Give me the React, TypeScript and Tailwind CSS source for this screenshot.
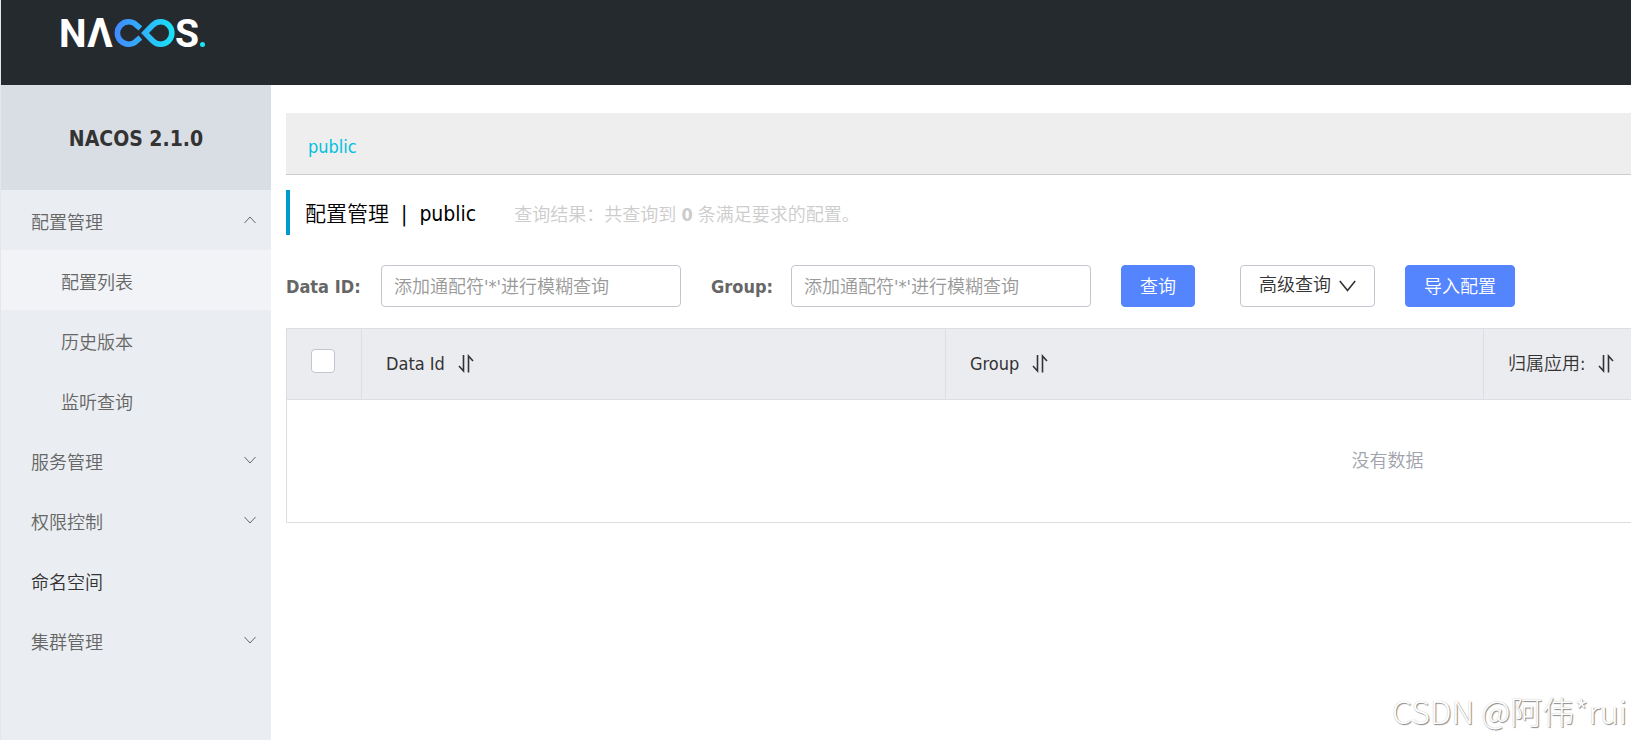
import { useState } from 'react';
import type { ReactNode } from 'react';

interface MenuItem {
  name: string;
  children?: string[];
}

const menu: MenuItem[] = [
  { name: '配置管理', children: ['配置列表', '历史版本', '监听查询'] },
  { name: '服务管理', children: [] },
  { name: '权限控制', children: [] },
  { name: '命名空间' },
  { name: '集群管理', children: [] },
];

function Logo() {
  return (
    <svg width="154" height="60" viewBox="56 4 154 60" role="img" aria-label="NACOS">
      <defs>
        <linearGradient id="loop" gradientUnits="userSpaceOnUse" x1="114" y1="33" x2="175" y2="33">
          <stop offset="0" stopColor="#4487ff" />
          <stop offset="1" stopColor="#18e4f8" />
        </linearGradient>
      </defs>
      <g fill="#fff" fontFamily="Roboto, sans-serif" fontWeight="700" fontSize="39">
        <text x="59" y="47">N</text>
        <text x="87" y="47" fontSize="40">Λ</text>
        <text x="175" y="47">S</text>
      </g>
      <g fill="none" stroke="url(#loop)" strokeWidth="5.6">
        <path d="M140.4 28.4 L136.2 24.8 A11.2 11.2 0 1 0 136.2 41.2 L140.4 37.6" />
        <path d="M145 33 L152.6 25.2 A11.2 11.2 0 1 1 152.6 40.8 Z" />
      </g>
      <circle cx="202.5" cy="44.5" r="2.5" fill="#18e4f8" />
    </svg>
  );
}

function Chevron({ up = false }: { up?: boolean }) {
  return (
    <svg width="12" height="14" viewBox="0 0 12 14" fill="none" stroke="currentColor">
      <path d={up ? 'M0.5 7 L6 1 L11.5 7' : 'M0.5 1 L6 7 L11.5 1'} />
    </svg>
  );
}

function SortButton({ label }: { label: string }) {
  return (
    <button aria-label={label} className="ml-[13px]">
      <svg width="16" height="20" viewBox="0 0 16 20" fill="none" stroke="currentColor" strokeWidth="1.6">
        <path d="M5.5 1 V17 L1 12" />
        <path d="M10.5 18.5 V2 L15 7" />
      </svg>
    </button>
  );
}

function HeadCell({ children, className = '' }: { children: ReactNode; className?: string }) {
  return (
    <th className={`border border-[#dcdee3] px-6 text-left font-normal whitespace-nowrap ${className}`}>
      <div className="flex items-center">{children}</div>
    </th>
  );
}

export default function App() {
  const [open, setOpen] = useState<Record<string, boolean>>({ 配置管理: true });
  const [dataId, setDataId] = useState('');
  const [group, setGroup] = useState('');

  const toggle = (name: string) => setOpen({ ...open, [name]: !open[name] });

  return (
    <div className="relative min-h-screen flex flex-col overflow-hidden border-l border-[#e6e6e6] bg-white font-['DejaVu_Sans_Condensed','Noto_Sans_CJK_SC_DemiLight','Noto_Sans_CJK_SC_Light','Noto_Sans_CJK_SC',sans-serif] text-lg text-[#333]">
      {/* Header */}
      <header className="h-[85px] bg-[#252a2f] px-[55px] pt-1">
        <a href="#" className="inline-block">
          <Logo />
        </a>
      </header>

      <div className="flex flex-1">
        {/* Sidebar */}
        <aside className="w-[270px] shrink-0 bg-[#eaedf1]">
          <h1 className="h-[105px] flex items-center justify-center bg-[#d9dde4] pt-1 text-[21px] font-bold">NACOS 2.1.0</h1>
          <nav>
            <ul>
              {menu.map(item => (
                <li key={item.name}>
                  {item.children ? (
                    <button
                      onClick={() => toggle(item.name)}
                      className="h-[60px] w-full flex items-center justify-between pl-[30px] pr-[15px] pt-1.5 text-[#666]"
                    >
                      {item.name}
                      <Chevron up={open[item.name]} />
                    </button>
                  ) : (
                    <a href="#" className="h-[60px] flex items-center pl-[30px] pt-1.5">{item.name}</a>
                  )}
                  {open[item.name] && (
                    <ul>
                      {item.children?.map((child, i) => (
                        <li key={child}>
                          <a
                            href="#"
                            className={`h-[60px] flex items-center pl-[60px] pt-1.5 text-[#666] ${i === 0 ? 'bg-[#f1f3f7]' : ''}`}
                          >
                            {child}
                          </a>
                        </li>
                      ))}
                    </ul>
                  )}
                </li>
              ))}
            </ul>
          </nav>
        </aside>

        {/* Main Content */}
        <main className="min-w-0 flex-1 overflow-hidden pl-[15px] pt-7">
          <div className="h-[62px] flex items-center border-b border-[#ccc] bg-[#eee] px-[22px] pt-1.5">
            <a href="#" className="text-[#00c1de]">public</a>
          </div>

          <div className="mt-[15px] h-[45px] flex items-center border-l-4 border-[#09c] pt-1 pl-[15px]">
            <h2 className="flex gap-3 text-[21px] text-black">
              <span>配置管理</span>
              <span>|</span>
              <span>public</span>
            </h2>
            <p className="ml-[38px] text-[#ccc]">
              查询结果：共查询到 <strong>0</strong> 条满足要求的配置。
            </p>
          </div>

          <form className="mt-[30px] flex items-center whitespace-nowrap" onSubmit={e => e.preventDefault()}>
            <label htmlFor="dataId" className="w-[95px] pt-0.5 font-bold text-[#666]">Data ID:</label>
            <input
              id="dataId"
              value={dataId}
              onChange={e => setDataId(e.target.value)}
              placeholder="添加通配符'*'进行模糊查询"
              className="h-[42px] w-[300px] rounded border border-[#c4c6cf] px-3 placeholder:text-[#999]"
            />
            <label htmlFor="group" className="ml-[30px] w-[80px] pt-0.5 font-bold text-[#666]">Group:</label>
            <input
              id="group"
              value={group}
              onChange={e => setGroup(e.target.value)}
              placeholder="添加通配符'*'进行模糊查询"
              className="h-[42px] w-[300px] rounded border border-[#c4c6cf] px-3 placeholder:text-[#999]"
            />
            <button className="ml-[30px] h-[42px] rounded border border-[#5584ff] bg-[#5584ff] px-[18px] pt-0.5 text-white">查询</button>
            <button type="button" className="ml-[45px] h-[42px] flex items-center gap-2 rounded border border-[#c4c6cf] px-[18px] pb-0.5">
              高级查询
              <svg width="17" height="12" viewBox="0 0 17 12" fill="none" stroke="currentColor" strokeWidth="1.6" className="mt-0.5">
                <path d="M0.8 1 L8.5 10.5 L16.2 1" />
              </svg>
            </button>
            <button type="button" className="ml-[30px] h-[42px] rounded border border-[#5584ff] bg-[#5584ff] px-[18px] pt-0.5 text-white">导入配置</button>
          </form>

          {/* The table is wider than the view and is cut off at the right */}
          <table className="mt-[21px] w-[2203px] table-fixed border-collapse">
            <thead>
              <tr className="h-[71px] bg-[#ebecf0]">
                <HeadCell className="w-[75px]">
                  <input
                    type="checkbox"
                    aria-label="全选"
                    className="mb-1.5 block size-6 shrink-0 appearance-none rounded border border-[#c4c6cf] bg-white checked:bg-[#5584ff]"
                  />
                </HeadCell>
                <HeadCell className="w-[584px]">
                  Data Id<SortButton label="Data Id" />
                </HeadCell>
                <HeadCell className="w-[538px]">
                  Group<SortButton label="Group" />
                </HeadCell>
                <HeadCell>
                  归属应用:<SortButton label="归属应用" />
                </HeadCell>
              </tr>
            </thead>
            <tbody>
              <tr className="h-[123px]">
                <td colSpan={4} className="border border-[#dcdee3] text-center text-[#a0a2ad]">没有数据</td>
              </tr>
            </tbody>
          </table>
        </main>
      </div>

      <span className="pointer-events-none absolute right-1 bottom-1.5 font-['Noto_Sans_CJK_SC',sans-serif] text-[32px] leading-[48px] font-light text-white [text-shadow:1px_1px_1px_#888,0_0_1px_#bbb]">
        CSDN @阿伟*rui
      </span>
    </div>
  );
}
